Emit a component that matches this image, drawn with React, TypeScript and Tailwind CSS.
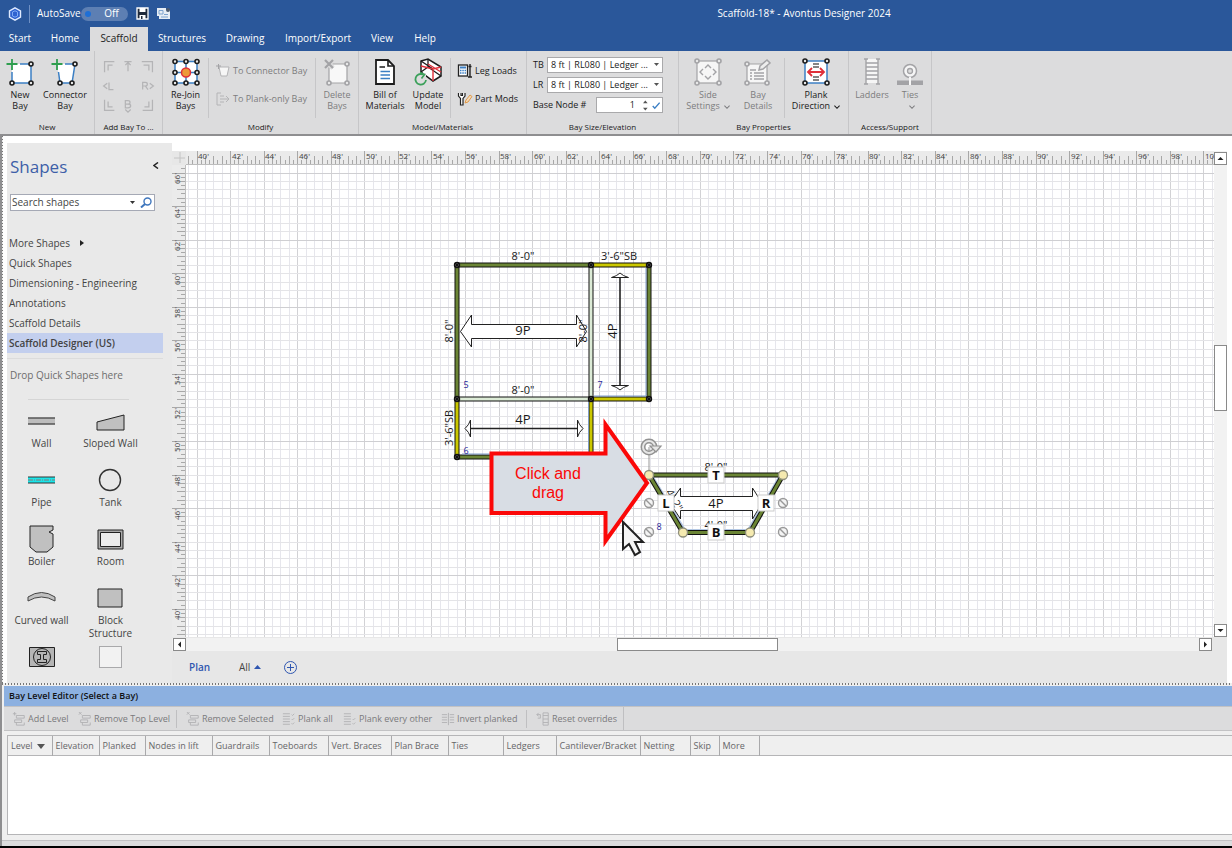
import type { ReactNode } from 'react';

const INK = '#1c1c1c';
const MUTED = '#a3a3a6';
const BLUE = '#3b7fc4';
const GREEN = '#6b8535';
const YELLOW = '#cbc800';
const PALE = '#dcebd6';

/* one foot pair on the rulers, in pixels */
const STEP = 33.56;

const Node = ({ x, y, color = INK }: { x: number; y: number; color?: string }) => (
    <circle cx={x} cy={y} r="2" fill="#e8e8e8" stroke={color} strokeWidth="1.6" />
);

const Icon = ({ children }: { children: ReactNode }) => (
    <svg className="h-7 w-8 shrink-0" viewBox="0 0 32 28" fill="none">
        {children}
    </svg>
);

const SmallIcon = ({ children }: { children: ReactNode }) => (
    <svg className="h-4 w-4 shrink-0" viewBox="0 0 16 16" fill="none">
        {children}
    </svg>
);

const NewBayIcon = () => (
    <Icon>
        <path d="M8 6H27V25H8Z" fill="#fff" />
        <path d="M16 6H27V25H8V14" stroke={BLUE} strokeWidth="1.5" />
        <path d="M8 1V12M2.500 6H13.500" stroke="#2f9e4f" strokeWidth="1.8" />
        <Node x={27} y={6} />
        <Node x={8} y={25} />
        <Node x={27} y={25} />
    </Icon>
);

const ConnectorBayIcon = () => (
    <Icon>
        <path d="M8 6H26L23 25H11Z" fill="#fff" />
        <path d="M16 6H26L23 25H11L9.500 14" stroke={BLUE} strokeWidth="1.5" />
        <path d="M8 1V12M2.500 6H13.500" stroke="#2f9e4f" strokeWidth="1.8" />
        <Node x={26} y={6} />
        <Node x={11} y={25} />
        <Node x={23} y={25} />
    </Icon>
);

const RejoinIcon = () => (
    <Icon>
        <path d="M5 3.500H27V25H5ZM5 14.500H27M16 3V25" fill="#fff" stroke={BLUE} strokeWidth="1.5" />
        {[5, 16, 27].map(x => [3.5, 14.5, 25].map(y => <Node key={`${x}-${y}`} x={x} y={y} />))}
        <circle cx="16" cy="14.500" r="4.500" fill="#ec9a3a" stroke="#e0303a" strokeWidth="1.5" />
    </Icon>
);

const DeleteIcon = () => (
    <Icon>
        <path d="M10 6H26V25H8V9" fill="#f8f8f8" stroke={MUTED} strokeWidth="1.200" />
        <path d="M3 2L12 10M12 2L3 10" stroke="#dcdcdd" strokeWidth="5" />
        <path d="M4 2L12 10M12 2L4 10" stroke={MUTED} strokeWidth="2.200" />
        <Node x={26} y={6} color={MUTED} />
        <Node x={8} y={25} color={MUTED} />
        <Node x={26} y={25} color={MUTED} />
    </Icon>
);

const BillIcon = () => (
    <Icon>
        <path d="M7 2H19L25 8V26H7Z" fill="#fff" stroke={INK} strokeWidth="1.800" />
        <path d="M19 2V8H25" stroke={INK} strokeWidth="1.600" />
        <path d="M10.500 9H16" stroke={INK} strokeWidth="1.500" />
        <path d="M11.500 13.500H21M11.500 17H21M11.500 20.500H21" stroke={BLUE} strokeWidth="1.600" />
    </Icon>
);

const UpdateIcon = () => (
    <Icon>
        <path d="M9 3L16 1L29 9V18L21 23L9 14Z" fill="#fff" stroke={INK} strokeWidth="1.500" />
        <path d="M9 3L21 11M16 1V9L29 18M16 9L9 14" stroke={INK} strokeWidth="1.300" />
        <path d="M9 8L21 11L29 9M21 11V23M16 6L29 14" stroke="#e0303a" strokeWidth="1.400" />
        <path d="M5 15H14V26H5Z" fill="#dcdcdd" />
        <path d="M11 16.500A5.300 5.300 0 1 0 14 22" stroke="#3ba05a" strokeWidth="1.800" />
        <path d="M8 14.500L12.500 16.500L9.500 20.500" stroke="#3ba05a" strokeWidth="1.600" />
    </Icon>
);

const SideIcon = () => (
    <Icon>
        <rect x="5" y="3" width="22" height="22" fill="#f6f6f6" stroke={MUTED} strokeWidth="1.200" />
        <path d="M13 10L16 7L19 10M13 18L16 21L19 18M11 11L8 14L11 17M21 11L24 14L21 17" stroke={MUTED} strokeWidth="1.400" />
        {[5, 27].map(x => [3, 25].map(y => <Node key={`${x}-${y}`} x={x} y={y} color={MUTED} />))}
    </Icon>
);

const DetailsIcon = () => (
    <Icon>
        <path d="M5 6H25V25H5Z" fill="#f6f6f6" stroke={MUTED} strokeWidth="1.200" />
        <path d="M8 12H14M8 15H10M12 15H22M8 18H10M12 18H22M8 21H10M12 21H22" stroke={MUTED} strokeWidth="1.400" />
        <path d="M17 12L18 8L25 2L28 5L21 11Z" fill="#ededed" stroke={MUTED} strokeWidth="1.500" />
        <Node x={5} y={6} color={MUTED} />
        <Node x={5} y={25} color={MUTED} />
        <Node x={25} y={25} color={MUTED} />
    </Icon>
);

const PlankIcon = () => (
    <Icon>
        <rect x="5" y="3" width="22" height="22" fill="#fff" stroke={BLUE} strokeWidth="1.500" />
        <path d="M13 6H19M13 9H19M13 19H19M13 22H19" stroke="#5c5c5c" strokeWidth="1.300" />
        <path d="M8 14H24M12 10L8 14L12 18M20 10L24 14L20 18" stroke="#e0303a" strokeWidth="1.800" />
        {[5, 27].map(x => [3, 25].map(y => <Node key={`${x}-${y}`} x={x} y={y} />))}
    </Icon>
);

const LadderIcon = () => (
    <Icon>
        <rect x="10" y="1" width="12" height="24" fill="#f6f6f6" />
        <path d="M10 1V26M22 1V26M10 5H22M10 9H22M10 13H22M10 17H22M10 21H22M8 1H12M20 1H24M8 26H12M20 26H24" stroke={MUTED} strokeWidth="1.400" />
    </Icon>
);

const TiesIcon = () => (
    <Icon>
        <path d="M3 22.500H29V27H3Z" fill={MUTED} />
        <circle cx="16" cy="13" r="6.500" fill="#f6f6f6" stroke={MUTED} strokeWidth="1.500" />
        <circle cx="16" cy="13" r="2.500" fill="#ddd" stroke={MUTED} strokeWidth="1.300" />
        <path d="M16 19V27" stroke="#f6f6f6" strokeWidth="2" />
    </Icon>
);

const Chevron = () => (
    <svg className="ml-1 inline h-1 w-[6px]" viewBox="0 0 7 4" fill="none">
        <path d="M.5.500L3.500 3.500L6.500.500" stroke="currentColor" strokeWidth="1.200" />
    </svg>
);

type RibbonButtonProps = {
    icon: ReactNode;
    lines: string[];
    width: string;
    disabled?: boolean;
    menu?: boolean;
};

const RibbonButton = ({ icon, lines, width, disabled, menu }: RibbonButtonProps) => (
    <button
        type="button"
        disabled={disabled}
        className={`flex flex-col items-center text-[9px] leading-[11px] whitespace-nowrap ${width} ${disabled ? 'text-[#7c7c7e]' : 'text-[#1a1a1a]'}`}
    >
        {icon}
        <span className="mt-[3px]">{lines[0]}</span>
        <span>
            {lines[1]}
            {menu && <Chevron />}
        </span>
    </button>
);

const RibbonGroup = ({ label, width, children }: { label: string; width: string; children: ReactNode }) => (
    <section className={`flex shrink-0 flex-col border-r border-[#c6c6c8] ${width}`}>
        <div className="flex flex-1 pt-[7px]">{children}</div>
        <h2 className="h-[14px] text-center text-[8px] leading-[14px] text-[#1a1a1a]">{label}</h2>
    </section>
);

const Divider = () => <div className="h-15 w-px shrink-0 bg-[#c6c6c8]" />;

const LineButton = ({ icon, text, disabled }: { icon: ReactNode; text: string; disabled?: boolean }) => (
    <button
        type="button"
        disabled={disabled}
        className={`flex items-center gap-[2px] text-[9px] whitespace-nowrap ${disabled ? 'text-[#7c7c7e]' : 'text-[#1a1a1a]'}`}
    >
        {icon}
        {text}
    </button>
);

const addIcons = [
    { name: 'Top left', d: 'M3 15V3H14M7 13V7H12' },
    { name: 'Top', d: 'M4 3H12M8 14V4M5 7L8 4L11 7' },
    { name: 'Top right', d: 'M1 3H13V15M3 7H9V13' },
    { name: 'Left', d: 'M6 5L2 8L6 11M8 4V12H13' },
    null,
    { name: 'Right', d: 'M2 12V4H5C8 4 8 8 5 8H2M5 8L8 12M10 5L14 8L10 11' },
    { name: 'Bottom left', d: 'M3 1V13H14M7 3V9H12' },
    { name: 'Bottom', d: 'M5 2H8C11 2 11 6 8 6H5ZM5 6H8C12 6 12 10 8 10H5ZM5 12L8 15L11 12' },
    { name: 'Bottom right', d: 'M13 1V13H2M9 3V9H4' },
];

const LedgerSelect = ({ label }: { label: string }) => (
    <div className="flex items-center">
        <label htmlFor={`ledger-${label}`} className="w-[14px]">
            {label}
        </label>
        <div className="relative h-4 flex-1">
            <select
                id={`ledger-${label}`}
                className="block h-4 w-full appearance-none border border-[#a9a9ab] bg-white pl-[3px] text-[9px] leading-[14px]"
            >
                <option>8 ft | RL080 | Ledger ...</option>
            </select>
            <svg className="pointer-events-none absolute top-[6px] right-1 h-[3px] w-[5px]" viewBox="0 0 5 3">
                <path d="M0 0H5L2.500 3Z" fill="#555" />
            </svg>
        </div>
    </div>
);

const tabs = [
    { name: 'Start', width: 'w-10' },
    { name: 'Home', width: 'w-[50px]' },
    { name: 'Scaffold', width: 'w-[58px]' },
    { name: 'Structures', width: 'w-[68px]' },
    { name: 'Drawing', width: 'w-[58px]' },
    { name: 'Import/Export', width: 'w-[88px]' },
    { name: 'View', width: 'w-10' },
    { name: 'Help', width: 'w-[46px]' },
];

const Header = () => (
    <header className="bg-[#2a579a] text-white">
        <div className="grid h-[27px] grid-cols-[1fr_auto_1fr] items-center text-[10px]">
            <div className="flex h-full items-center pl-2">
                <svg className="h-[14px] w-[14px]" viewBox="0 0 14 14">
                    <path d="M7 .8L12.500 4V10L7 13.200L1.500 10V4Z" fill="#2f62d0" stroke="#dfeaff" strokeWidth="1.400" />
                    <path d="M4.500 5L7 3.800L9.500 5V9L7 10.200L4.500 9Z" fill="none" stroke="#7faaf5" />
                </svg>
                <div className="mr-[7px] ml-[7px] h-[18px] w-px bg-[#6f90c4]" />
                <span>AutoSave</span>
                <button type="button" role="switch" aria-checked="false" aria-label="AutoSave" className="flex h-[14px] w-[47px] items-center justify-between rounded-full bg-[#5d7fb3] pr-[9px] pl-1">
                    <span className="h-[6px] w-[6px] rounded-full bg-[#1e6fd6]" />
                    <span>Off</span>
                </button>
                <button type="button" aria-label="Save" className="ml-2">
                    <svg className="h-[13px] w-[13px]" viewBox="0 0 13 13" fill="none">
                        <path d="M1 1H12V12H1Z" fill="#1f2a3c" stroke="#fff" strokeWidth="1.300" />
                        <path d="M3.500 1H9.500V5H3.500ZM3.500 8H9.500V12H3.500Z" fill="#fff" />
                        <path d="M5 9H6.500V12H5Z" fill="#1f2a3c" />
                    </svg>
                </button>
                <button type="button" aria-label="Drawing settings" className="ml-2">
                    <svg className="h-[13px] w-[13px]" viewBox="0 0 13 13" fill="none">
                        <path d="M0 1H9V3H13V12H2V9H0Z" fill="#e6edf5" />
                        <path d="M2 3.500H6V7H2ZM4 10H11M7 7.500H11" stroke="#7da3cf" />
                        <circle cx="11" cy="3" r="2" fill="#4a5a70" />
                    </svg>
                </button>
            </div>
            <h1 className="ml-[376px]">Scaffold-18* - Avontus Designer 2024</h1>
        </div>
        <nav className="flex h-6 text-[10px]">
            {tabs.map(tab => (
                <button
                    key={tab.name}
                    type="button"
                    className={`pb-px ${tab.width} ${tab.name === 'Scaffold' ? 'bg-[#dcdcdd] text-[#222]' : ''}`}
                >
                    {tab.name}
                </button>
            ))}
        </nav>
    </header>
);

const Ribbon = () => (
    <div className="flex h-[83px] shrink-0 bg-[#dcdcdd]">
        <RibbonGroup label="New" width="w-[95px]">
            <RibbonButton width="w-10" icon={<NewBayIcon />} lines={['New', 'Bay']} />
            <RibbonButton width="w-[50px]" icon={<ConnectorBayIcon />} lines={['Connector', 'Bay']} />
        </RibbonGroup>
        <RibbonGroup label="Add Bay To ..." width="w-[68px]">
            <div className="grid flex-1 grid-cols-3 content-start justify-items-center gap-y-1 px-1">
                {addIcons.map((item, i) =>
                    item ? (
                        <button key={item.name} type="button" disabled aria-label={item.name}>
                            <svg className="h-4 w-4" viewBox="-1 -1 18 18" fill="none">
                                <path d={item.d} stroke="#b4b4b6" strokeWidth="1.400" />
                            </svg>
                        </button>
                    ) : (
                        <span key={i} />
                    ),
                )}
            </div>
        </RibbonGroup>
        <RibbonGroup label="Modify" width="w-[196px]">
            <RibbonButton width="w-[45px]" icon={<RejoinIcon />} lines={['Re-Join', 'Bays']} />
            <Divider />
            <div className="flex w-[106px] flex-col gap-3 pt-[5px] pl-[6px]">
                <LineButton
                    disabled
                    text="To Connector Bay"
                    icon={
                        <SmallIcon>
                            <path d="M4 4H14L12 13H6Z" fill="#f6f6f6" stroke="#b4b4b6" />
                            <path d="M1 3H6M3.500 1V6" stroke={MUTED} />
                        </SmallIcon>
                    }
                />
                <LineButton
                    disabled
                    text="To Plank-only Bay"
                    icon={
                        <SmallIcon>
                            <path d="M6 2H2V14H6M5 5H9M5 11H9M5 8H14M11 5L14 8L11 11" stroke="#b4b4b6" />
                        </SmallIcon>
                    }
                />
            </div>
            <Divider />
            <RibbonButton width="w-[42px]" disabled icon={<DeleteIcon />} lines={['Delete', 'Bays']} />
        </RibbonGroup>
        <RibbonGroup label="Model/Materials" width="w-[168px]">
            <div className="flex w-[91px] pl-1">
                <RibbonButton width="w-[44px]" icon={<BillIcon />} lines={['Bill of', 'Materials']} />
                <RibbonButton width="w-[42px]" icon={<UpdateIcon />} lines={['Update', 'Model']} />
            </div>
            <Divider />
            <div className="flex flex-col gap-3 pt-[5px] pl-[6px]">
                <LineButton
                    text="Leg Loads"
                    icon={
                        <SmallIcon>
                            <rect x="1.500" y="2" width="9" height="11" fill="#fff" stroke="#222" strokeWidth="1.300" />
                            <path d="M3 4.500H9" stroke={BLUE} strokeWidth="2" />
                            <path d="M3 7.500H9M3 10H9" stroke={BLUE} strokeDasharray="1.500 .8" strokeWidth="1.500" />
                            <path d="M13 1V14M11.500 3.500H14.500M11 14H15" stroke="#222" strokeWidth="1.400" />
                        </SmallIcon>
                    }
                />
                <LineButton
                    text="Part Mods"
                    icon={
                        <SmallIcon>
                            <path d="M1.500 2V5L3.500 7.500V14H6V7.500L8 5V2M4 2V4.500H5.500V2" fill="#fff" stroke="#222" strokeWidth="1.200" />
                            <path d="M8 12L9 9L13 4L15 5.500L11 11Z" fill="#f3d9b8" stroke="#e09a4a" />
                        </SmallIcon>
                    }
                />
            </div>
        </RibbonGroup>
        <RibbonGroup label="Bay Size/Elevation" width="w-[152px]">
            <div className="-mt-px flex flex-1 flex-col gap-1 pr-[15px] pl-[6px] text-[9px] text-[#1a1a1a]">
                <LedgerSelect label="TB" />
                <LedgerSelect label="LR" />
                <div className="flex items-center justify-between">
                    <label htmlFor="base-node">Base Node #</label>
                    <div className="flex h-4 w-[67px] items-center border border-[#a9a9ab] bg-white pr-[2px]">
                        <input id="base-node" defaultValue="1" className="w-[38px] flex-1 text-right" />
                        <svg className="mx-1 ml-2 h-[11px] w-[5px]" viewBox="0 0 5 11">
                            <path d="M0 3H5L2.500 0ZM0 8H5L2.500 11Z" fill="#555" />
                        </svg>
                        <svg className="h-[9px] w-[9px]" viewBox="0 0 9 9" fill="none">
                            <path d="M.8 5L3 7.500L8.200 1.500" stroke={BLUE} strokeWidth="1.400" />
                        </svg>
                    </div>
                </div>
            </div>
        </RibbonGroup>
        <RibbonGroup label="Bay Properties" width="w-[170px]">
            <div className="flex w-[105px] pl-[3px]">
                <RibbonButton width="w-[52px]" disabled menu icon={<SideIcon />} lines={['Side', 'Settings']} />
                <RibbonButton width="w-[48px]" disabled icon={<DetailsIcon />} lines={['Bay', 'Details']} />
            </div>
            <Divider />
            <RibbonButton width="w-[62px]" menu icon={<PlankIcon />} lines={['Plank', 'Direction']} />
        </RibbonGroup>
        <RibbonGroup label="Access/Support" width="w-[83px]">
            <RibbonButton width="w-[46px]" disabled icon={<LadderIcon />} lines={['Ladders']} />
            <RibbonButton width="w-[30px]" disabled menu icon={<TiesIcon />} lines={['Ties']} />
        </RibbonGroup>
    </div>
);

const stencils = [
    {
        name: 'Wall',
        art: (
            <g stroke="#555" strokeWidth="1.500">
                <path d="M7 12H34V18H7Z" fill="#bdbdbd" stroke="none" />
                <path d="M7 12H34M7 18H34" />
            </g>
        ),
    },
    { name: 'Sloped Wall', art: <path d="M7 24V16L34 9V24Z" fill="#c0c0c0" stroke="#222" /> },
    {
        name: 'Pipe',
        art: (
            <>
                <path d="M7 12H34V18H7Z" fill="#19e6ea" />
                <path d="M7 12H34M7 18H34" stroke="#333" />
                <path d="M7 15H34" stroke="#a55" strokeWidth=".8" strokeDasharray="5 1 1 1" />
            </>
        ),
    },
    { name: 'Tank', art: <circle cx="20" cy="15" r="10.500" stroke="#333" strokeWidth="1.400" /> },
    { name: 'Boiler', art: <path d="M9 2H32V6L28 8L32 10V23L26 28H15L9 23Z" fill="#c0c0c0" stroke="#222" /> },
    {
        name: 'Room',
        art: (
            <g stroke="#222">
                <path d="M8 6H33V25H8Z" fill="#aaa" />
                <path d="M10.500 8.500H30.500V22.500H10.500Z" fill="#ececec" />
            </g>
        ),
    },
    { name: 'Curved wall', art: <path d="M7 14Q20.500 5 34 14V18Q20.500 10 7 18Z" fill="#c0c0c0" stroke="#444" /> },
    { name: 'Block Structure', art: <path d="M8 6H32V24H8Z" fill="#c0c0c0" stroke="#222" /> },
];

const lists = ['Quick Shapes', 'Dimensioning - Engineering', 'Annotations', 'Scaffold Details', 'Scaffold Designer (US)'];

const ShapesPanel = () => (
    <aside className="mt-[7px] ml-1 flex w-[165px] shrink-0 flex-col overflow-hidden bg-[#e9e9e9] pr-[9px] text-[10px] text-[#444]">
        <div className="flex h-12 items-center justify-between pr-1 pl-[3px]">
            <h2 className="text-[17px] text-[#3d5fa8]">Shapes</h2>
            <button type="button" aria-label="Collapse shapes" className="pb-1">
                <svg className="h-[7px] w-[6px]" viewBox="0 0 6 7" fill="none">
                    <path d="M5 .5L1 3.500L5 6.500" stroke="#222" strokeWidth="1.500" />
                </svg>
            </button>
        </div>
        <div className="mt-[3px] mr-2 ml-[3px] flex h-[17px] shrink-0 items-center border border-[#a5a9b5] bg-white pr-[2px]">
            <input aria-label="Search shapes" placeholder="Search shapes" className="w-[116px] pl-px placeholder:text-[#444]" />
            <svg className="ml-[3px] h-[3px] w-[5px] shrink-0" viewBox="0 0 5 3">
                <path d="M0 0H5L2.500 3Z" fill="#333" />
            </svg>
            <button type="button" aria-label="Search" className="ml-[5px]">
                <svg className="h-[11px] w-[12px]" viewBox="0 0 12 11" fill="none">
                    <circle cx="7.500" cy="4.500" r="3.500" stroke="#3f76bd" strokeWidth="1.400" />
                    <path d="M5 7L1 10.500" stroke="#3f76bd" strokeWidth="2" />
                </svg>
            </button>
        </div>
        <nav className="mt-[22px]">
            <button type="button" className="flex h-5 items-center gap-[10px] pl-[2px]">
                More Shapes
                <svg className="h-[6px] w-1" viewBox="0 0 4 6">
                    <path d="M0 0L4 3L0 6Z" fill="#222" />
                </svg>
            </button>
            {lists.map((name, i) => (
                <button
                    key={name}
                    type="button"
                    className={`block h-5 w-full pl-[2px] text-left ${i === 4 ? 'bg-[#c3cfee] font-semibold' : ''}`}
                >
                    {name}
                </button>
            ))}
        </nav>
        <p className="mt-[5px] h-[41px] border-t border-[#dcdcdc] pt-[9px] pl-[3px] text-[#6d6d6d]">Drop Quick Shapes here</p>
        <div className="mr-[34px] ml-[21px] h-px shrink-0 bg-[#d5d5d5]" />
        <div className="grid w-[138px] grid-cols-2 text-center leading-[13px]">
            {stencils.map(({ name, art }) => (
                <button key={name} type="button" className="flex h-[59px] flex-col items-center pt-[6px]">
                    <svg className="h-[30px] w-[41px] shrink-0" viewBox="0 0 41 30" fill="none">
                        {art}
                    </svg>
                    <span className="mt-px w-[60px]">{name}</span>
                </button>
            ))}
            <button type="button" aria-label="Column" className="flex justify-center pt-[11px]">
                <svg className="h-5 w-[26px]" viewBox="0 0 26 20" fill="none" stroke="#222">
                    <path d="M.5.500H25.500V19.500H.5Z" fill="#b5b5b5" />
                    <circle cx="13" cy="10" r="8.500" />
                    <path d="M8.500 4.500H17.500V7.500H14.500V12.500H17.500V15.500H8.500V12.500H11.500V7.500H8.500Z" />
                </svg>
            </button>
            <button type="button" aria-label="Blank" className="flex justify-center pt-[10px]">
                <span className="h-[22px] w-[23px] border border-[#a9a9ab] bg-[#f2f2f2]" />
            </button>
        </div>
    </aside>
);

/* ticks every three inches, a long one with its label every two feet */
const TopRuler = () => (
    <svg className="block h-[14px] w-full bg-[#ebebeb]" fontSize="8" fill="#444">
        {Array.from({ length: 260 }, (_, i) => {
            const x = Math.round(10.5 + ((i - 2) * STEP) / 8) + 0.5;
            const k = (i - 2) % 8;
            const y = k === 0 ? 0 : k % 2 === 0 ? 5 : 9;
            return <path key={i} d={`M${x} ${y}V14`} stroke="#a8a8a8" />;
        })}
        {Array.from({ length: 31 }, (_, i) => (
            <text key={i} x={Math.round(12 + i * STEP)} y="8">
                {40 + i * 2}'
            </text>
        ))}
        <path d="M0 13.500H3000" stroke="#bdbdbd" />
    </svg>
);

const SideRuler = () => (
    <svg className="block h-full w-[14px] shrink-0 bg-[#ebebeb]" fontSize="8" fill="#444">
        {Array.from({ length: 160 }, (_, i) => {
            const y = Math.round(7.5 + ((i - 1) * STEP) / 8) + 0.5;
            const k = (i + 7) % 8;
            const x = k === 0 ? 0 : k % 2 === 0 ? 5 : 9;
            return <path key={i} d={`M${x} ${y}H14`} stroke="#a8a8a8" />;
        })}
        {Array.from({ length: 14 }, (_, i) => (
            <text key={i} transform={`translate(8 ${Math.round(19 + i * STEP)}) rotate(-90)`}>
                {66 - i * 2}'
            </text>
        ))}
        <path d="M13.500 0V2000" stroke="#bdbdbd" />
    </svg>
);

const Grid = () => (
    <g shapeRendering="crispEdges">
        {Array.from({ length: 260 }, (_, i) => {
            const x = Math.round(10.5 + ((i - 1) * STEP) / 4) + 0.5;
            return <path key={i} d={`M${x} 0V2000`} stroke={(i - 1) % 4 === 0 ? '#d2d2d5' : '#e6e6ec'} />;
        })}
        {Array.from({ length: 160 }, (_, i) => {
            const y = Math.round(7.5 + (i * STEP) / 4) + 0.5;
            return <path key={i} d={`M0 ${y}H3000`} stroke={i % 8 === 0 ? '#cfcfd2' : '#e4e4e7'} />;
        })}
    </g>
);

const Beam = ({ d, color, width = 3 }: { d: string; color: string; width?: number }) => (
    <>
        <path d={d} stroke="#111" strokeWidth={width + 2} />
        <path d={d} stroke={color} strokeWidth={width} />
    </>
);

const Joint = ({ x, y }: { x: number; y: number }) => (
    <g stroke="#111">
        <circle cx={x} cy={y} r="2.500" fill="#555" strokeWidth="1.400" />
        <path d={`M${x - 2} ${y - 2}L${x + 2} ${y + 2}M${x + 2} ${y - 2}L${x - 2} ${y + 2}`} />
    </g>
);

const Blocked = ({ x, y }: { x: number; y: number }) => (
    <g stroke="#999" strokeWidth="1.400">
        <circle cx={x} cy={y} r="4.500" fill="#f4f4f4" />
        <path d={`M${x - 3} ${y - 3}L${x + 3} ${y + 3}`} />
    </g>
);

const SideTag = ({ x, y, text }: { x: number; y: number; text: string }) => (
    <>
        <rect x={x - 8} y={y - 8} width="16" height="16" fill="#fff" stroke="#ccc" />
        <text x={x} y={y + 5} fontSize="13" fontWeight="700" fill="#111">
            {text}
        </text>
    </>
);

const joints = [
    [271, 100],
    [405, 100],
    [463, 100],
    [271, 234],
    [405, 234],
    [463, 234],
    [271, 292],
];

const ScaffoldPlan = () => (
    <svg className="block min-w-0 flex-1 bg-white" fill="none">
        <Grid />
        <Beam d="M271 100V234" color={GREEN} />
        <Beam d="M271 234V292" color={YELLOW} />
        <Beam d="M271 292H405" color={GREEN} />
        <Beam d="M405 234V292" color={YELLOW} />
        <Beam d="M405 100V234" color={PALE} />
        <Beam d="M271 234H405" color={PALE} />
        <Beam d="M271 100H405" color={GREEN} />
        <Beam d="M405 100H463" color={YELLOW} />
        <Beam d="M405 234H463" color={YELLOW} />
        <Beam d="M463 100V234" color={GREEN} />
        <path d="M402.500 237V289M460 103V231M408 231H460M276 289H402" stroke="#7f9cc8" />
        {joints.map(([x, y]) => (
            <Joint key={`${x}-${y}`} x={x} y={y} />
        ))}
        <g stroke="#222" fill="#fff">
            <path d="M274.500 166.500L285.500 150V159.500H390.500V150L400.500 166.500L390.500 182V173.500H285.500V182Z" />
            <path d="M285 263.500H391M434 113V221" strokeWidth="1.600" />
            <path d="M279 263.500Q283 260 284.500 255V272Q283 267 279 263.500ZM397 263.500Q393 260 391.500 255V272Q393 267 397 263.500Z" />
            <path d="M434 108Q437 111 442.500 112.500H425.500Q431 111 434 108ZM434 225Q437 222 442.500 220.500H425.500Q431 222 434 225Z" />
        </g>
        <g fill="#1a1a1a" fontSize="11" textAnchor="middle">
            <text x="337" y="95">8'-0"</text>
            <text x="433" y="95">3'-6"SB</text>
            <text x="337" y="229">8'-0"</text>
            <text transform="translate(267 166) rotate(-90)">8'-0"</text>
            <text transform="translate(401 166) rotate(-90)">8'-0"</text>
            <text transform="translate(267 263) rotate(-90)">3'-6"SB</text>
            <g fontSize="13">
                <text x="337" y="170">9P</text>
                <text x="337" y="259">4P</text>
                <text transform="translate(431 166) rotate(-90)">4P</text>
            </g>
            <g fill="#27279a" fontSize="9">
                <text x="280" y="223">5</text>
                <text x="414" y="223">7</text>
                <text x="280" y="289">6</text>
            </g>
        </g>

        {/* selected connector bay */}
        <path d="M463 282V306" stroke="#999" />
        <path d="M467 312L499 365H562L593 312" stroke="#b4c8e4" strokeWidth="2" />
        <Beam d="M463 310H597" color={GREEN} />
        <Beam d="M463 310L497 367.500" color={GREEN} />
        <Beam d="M597 310L564 367.500" color={GREEN} />
        <Beam d="M497 367.500H564" color={GREEN} />
        <path d="M484 338L494.500 323V331.500H566.500V323L576 338L566.500 354V345.500H494.500V354Z" fill="#fff" stroke="#222" />
        <g fill="#1a1a1a" fontSize="11" textAnchor="middle">
            <text x="530" y="306">8'-0"</text>
            <text x="530" y="364">4'-0"</text>
            <text transform="translate(485 337) rotate(60)">4'-2"</text>
            <text x="530" y="343" fontSize="13">4P</text>
            <text x="473" y="365" fontSize="9" fill="#27279a">8</text>
            <SideTag x={530} y={310} text="T" />
            <SideTag x={480} y={338} text="L" />
            <SideTag x={580} y={338} text="R" />
            <SideTag x={530} y={367} text="B" />
        </g>
        <g fill="#f5eab0" stroke="#8f8f7c" strokeWidth="1.300">
            <circle cx="463" cy="310" r="4.500" />
            <circle cx="597" cy="310" r="4.500" />
            <circle cx="497" cy="367.500" r="4.500" />
            <circle cx="564" cy="367.500" r="4.500" />
        </g>
        <Blocked x={463} y={338} />
        <Blocked x={597} y={338} />
        <Blocked x={463} y={367} />
        <Blocked x={597} y={367} />
        <circle cx="463" cy="282" r="6" stroke="#929292" strokeWidth="5" />
        <circle cx="463" cy="282" r="6" stroke="#e6e6e6" strokeWidth="2" />
        <path d="M464 281H475L470 287Z" fill="#e6e6e6" stroke="#929292" strokeWidth="1.200" />

        {/* callout */}
        <path d="M305.500 288.500H419.500V259.500L461 318L419.500 376V348H305.500Z" fill="#d8dde4" stroke="#fb0808" strokeWidth="4" />
        <g className="[font-family:'Liberation_Sans',Arial,sans-serif]" fill="#fb0808" fontSize="16" textAnchor="middle">
            <text x="362" y="314">Click and</text>
            <text x="362" y="333">drag</text>
        </g>
        <path d="M437 357V384L443 379L449 390L454 387L449 377H457Z" fill="#f5f5f5" stroke="#222" strokeWidth="2" />
    </svg>
);

const ScrollButton = ({ label, d }: { label: string; d: string }) => (
    <button type="button" aria-label={label} className="h-[13px] w-[13px] shrink-0 border border-[#8a8a8a] bg-white">
        <svg className="block h-[11px] w-[11px]" viewBox="0 0 11 11">
            <path d={d} fill="#222" />
        </svg>
    </button>
);

const Workspace = () => (
    <main className="flex min-h-0 flex-1 border-t-2 border-[#8e8e90] bg-white">
        <div className="w-[2px] shrink-0 bg-[#8e8e90]" />
        <div className="w-px shrink-0 bg-[repeating-linear-gradient(0deg,#777_0_1px,#eee_1px_3px)]" />
        <ShapesPanel />
        <div className="mr-[5px] flex min-w-0 flex-1 flex-col bg-[#e7e7e7]">
            <div className="h-[15px] shrink-0 bg-white" />
            <div className="flex min-h-0 flex-1">
                <div className="flex min-w-0 flex-1 flex-col">
                    <div className="flex">
                        <svg className="h-[14px] w-[14px] shrink-0" viewBox="0 0 14 14">
                            <path d="M8 1V12M2 7H13" stroke="#c4c4c4" />
                        </svg>
                        <TopRuler />
                    </div>
                    <div className="flex min-h-0 flex-1">
                        <SideRuler />
                        <ScaffoldPlan />
                    </div>
                </div>
                <div className="flex w-[13px] shrink-0 flex-col bg-[#f2f2f2] pt-px">
                    <ScrollButton label="Scroll up" d="M2.500 7H8.500L5.500 4Z" />
                    <div className="flex-[180]" />
                    <div className="h-[66px] border border-[#8a8a8a] bg-white" />
                    <div className="flex-[212]" />
                    <ScrollButton label="Scroll down" d="M2.500 4H8.500L5.500 7Z" />
                </div>
            </div>
            <div className="mt-px mr-[15px] flex h-[13px] shrink-0 bg-[#f2f2f2] pl-px">
                <ScrollButton label="Scroll left" d="M7 2.500V8.500L4 5.500Z" />
                <div className="flex-[432]" />
                <div className="w-[161px] border border-[#8a8a8a] bg-white" />
                <div className="flex-[422]" />
                <ScrollButton label="Scroll right" d="M4 2.500V8.500L7 5.500Z" />
            </div>
            <div className="flex h-8 shrink-0 items-center pl-[17px] text-[10px]">
                <button type="button" className="w-[50px] text-left font-semibold text-[#2f56b0]">
                    Plan
                </button>
                <button type="button" className="flex w-[45px] items-center gap-1 text-[#444]">
                    All
                    <svg className="h-1 w-[7px]" viewBox="0 0 7 4">
                        <path d="M0 4H7L3.500 0Z" fill="#2f56b0" />
                    </svg>
                </button>
                <button type="button" aria-label="Add page">
                    <svg className="h-[13px] w-[13px]" viewBox="0 0 13 13" fill="none" stroke="#2f56b0">
                        <circle cx="6.500" cy="6.500" r="6" />
                        <path d="M6.500 3V10M3 6.500H10" />
                    </svg>
                </button>
            </div>
        </div>
    </main>
);

const rowArt = 'M5 4H14V7H5ZM3 9H11V12H3ZM5 12V15H14V12';
const listArt = 'M1 2H9M1 5H9M1 8H9M1 11H9M1 14H9';

const levelTools = [
    { name: 'Add Level', width: 'w-[66px]', d: `M1 2H5M3 0V4${rowArt}` },
    { name: 'Remove Top Level', width: 'w-[98px]', d: `M1 0L4 3M4 0L1 3${rowArt}` },
    { name: 'Remove Selected', width: 'w-[96px]', d: `M1 0L4 3M4 0L1 3${rowArt}`, divided: true },
    { name: 'Plank all', width: 'w-[61px]', d: `${listArt}M11 3L12 4L14 2M11 8L12 9L14 7M11 13L12 14L14 12` },
    { name: 'Plank every other', width: 'w-[98px]', d: `${listArt}M11 8L12 9L14 7M11 13L12 14L14 12` },
    { name: 'Invert planked', width: 'w-[85px]', d: 'M1 3H7M1 6H7M1 9H7M1 12H7M8.500 1V15M10 3H15M10 6H15M10 9H15M10 12H15' },
    { name: 'Reset overrides', width: 'w-[87px]', d: 'M3 1L1 3L3 5M1 3H5V7H2M8 1H14V15H8ZM8 4H14M8 8H14M8 12H14', divided: true },
];

const columns = [
    { name: 'Level', width: 'w-[44px]' },
    { name: 'Elevation', width: 'w-[47px]' },
    { name: 'Planked', width: 'w-[46px]' },
    { name: 'Nodes in lift', width: 'w-[67px]' },
    { name: 'Guardrails', width: 'w-[57px]' },
    { name: 'Toeboards', width: 'w-[59px]' },
    { name: 'Vert. Braces', width: 'w-[63px]' },
    { name: 'Plan Brace', width: 'w-[57px]' },
    { name: 'Ties', width: 'w-[55px]' },
    { name: 'Ledgers', width: 'w-[53px]' },
    { name: 'Cantilever/Bracket', width: 'w-[84px]' },
    { name: 'Netting', width: 'w-[50px]' },
    { name: 'Skip', width: 'w-[29px]' },
    { name: 'More', width: 'w-[40px]' },
];

const LevelEditor = () => (
    <section className="shrink-0 border-l-2 border-[#8e8e90] bg-[#efefef]">
        <div className="h-[2px] bg-[repeating-linear-gradient(90deg,#777_0_1px,#eee_1px_3px)]" />
        <h2 className="mt-px ml-[2px] h-5 bg-[#8cb0e0] pl-[5px] text-[9px] leading-5 font-semibold text-[#111]">
            Bay Level Editor (Select a Bay)
        </h2>
        <div className="ml-[2px] flex h-[25px] border-y border-[#c2c2c4] bg-[#dcdcdd] pl-2 text-[9px] text-[#7a7a7c]">
            {levelTools.map(tool => (
                <div key={tool.name} className="flex items-center">
                    {tool.divided && <div className="mr-[9px] h-[18px] w-px bg-[#bfbfc1]" />}
                    <button type="button" disabled className={`flex items-center gap-[2px] whitespace-nowrap ${tool.width}`}>
                        <svg className="h-[14px] w-[14px] shrink-0" viewBox="0 0 16 16" fill="none">
                            <path d={tool.d} stroke="#b0b0b2" />
                        </svg>
                        {tool.name}
                    </button>
                </div>
            ))}
            <div className="w-px bg-[#bfbfc1]" />
        </div>
        <div className="mt-1 ml-[5px] h-[100px] border border-r-0 border-[#b5b5b7] bg-white">
            <table className="w-full table-fixed border-collapse text-[9px] text-[#666668]">
                <thead>
                    <tr className="h-[19px] border-b border-[#b5b5b7] bg-[#efefef]">
                        {columns.map(column => (
                            <th
                                key={column.name}
                                className={`border-r border-[#a9a9ab] p-0 pl-[3px] text-left font-normal whitespace-nowrap ${column.width}`}
                            >
                                {column.name}
                                {column.name === 'Level' && (
                                    <svg className="ml-1 inline h-[5px] w-2" viewBox="0 0 8 5">
                                        <path d="M0 0H8L4 5Z" fill="#555" />
                                    </svg>
                                )}
                            </th>
                        ))}
                        <th aria-label="Empty" />
                    </tr>
                </thead>
            </table>
        </div>
        <div className="mt-[5px] h-[6px] border-t border-[#c2c2c4] bg-[#dcdcdd]" />
        <div className="-ml-[2px] h-[2px] bg-black" />
    </section>
);

const App = () => {
    return (
        <div className="flex h-screen min-h-[700px] flex-col overflow-hidden font-['Open_Sans','Noto_Sans',sans-serif]">
            <Header />
            <Ribbon />
            <Workspace />
            <LevelEditor />
        </div>
    );
};

export default App;
